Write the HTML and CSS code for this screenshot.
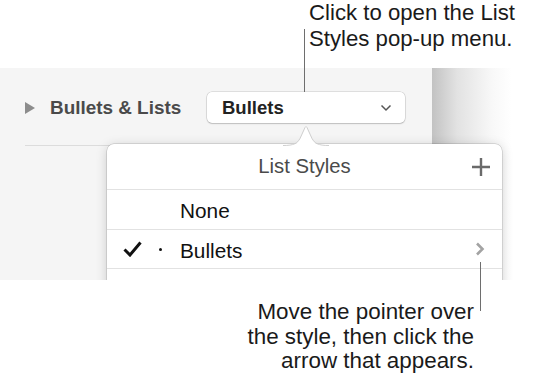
FILE: index.html
```html
<!DOCTYPE html>
<html lang="en">
<head>
    <meta charset="UTF-8">
    <meta content="width=device-width, initial-scale=1.0" name="viewport">
    <title>List Styles pop-up menu</title>
    <link rel="stylesheet" href="styles.css">
</head>
<body>
<div class="note note-top">Click to open the List<br>Styles pop-up menu.</div>
<div class="callout-line callout-top"></div>

<div class="shot">
    <div class="panel">
        <div class="panel-row">
            <span class="disclosure"></span>
            <span class="section-title">Bullets &amp; Lists</span>
            <div class="popup-button">
                <span>Bullets</span>
                <svg width="12" height="8" viewBox="0 0 12 8">
                    <path d="M1.5 1.5 L6 6 L10.5 1.5" fill="none" stroke="#555" stroke-width="1.5"/>
                </svg>
            </div>
        </div>
        <div class="panel-rule"></div>
    </div>
    <div class="shade"></div>

    <svg class="popover-arrow" width="46" height="22" viewBox="0 0 46 22">
        <path d="M0 22 C11 22 14 20 17 15 L22 4 Q23 2 24 4 L29 15 C32 20 35 22 46 22 Z" fill="#fff"/>
        <path d="M0 21.5 C11 21.5 14 19.5 17 14.5 L22 3.5 Q23 1.5 24 3.5 L29 14.5 C32 19.5 35 21.5 46 21.5" fill="none" stroke="#cfcfcf" stroke-width="1"/>
    </svg>

    <div class="popover">
        <div class="popover-head">
            <span></span>
            <span class="popover-title">List Styles</span>
            <svg class="plus" width="18" height="18" viewBox="0 0 18 18">
                <path d="M9 0 V18 M0 9 H18" stroke="#6a6a6a" stroke-width="2.4"/>
            </svg>
        </div>
        <div class="item">
            <span class="check"></span>
            <span class="dot"></span>
            <span class="name">None</span>
        </div>
        <div class="item">
            <span class="check">
                <svg width="19" height="16" viewBox="0 0 19 16">
                    <path d="M1.5 8.5 L7 14 L17.5 1.5" fill="none" stroke="#111" stroke-width="3"/>
                </svg>
            </span>
            <span class="dot"><i></i></span>
            <span class="name">Bullets</span>
            <svg class="go" width="10" height="14" viewBox="0 0 10 14">
                <path d="M2 1.5 L7.5 7 L2 12.5" fill="none" stroke="#a3a3a3" stroke-width="2.6"/>
            </svg>
        </div>
        <div class="item"></div>
    </div>
</div>

<div class="callout-line callout-bottom"></div>
<div class="note note-bottom">Move the pointer over<br>the style, then click the<br>arrow that appears.</div>
</body>
</html>
```

FILE: styles.css
```css
body {
    font-family: "Liberation Sans", Arial, sans-serif;
    margin: 0;
    width: 534px;
    height: 382px;
    position: relative;
    overflow: hidden;
    background: #fff;
}

.note {
    color: #1a1a1a;
}

.note-top {
    height: 68px;
    padding-left: 309px;
    box-sizing: border-box;
    font-size: 22.2px;
    line-height: 25.5px;
}

.note-bottom {
    padding-top: 20px;
    padding-right: 60px;
    text-align: right;
    font-size: 22.4px;
    line-height: 24.5px;
}

.callout-line {
    position: absolute;
    width: 1px;
    background: #6e6e6e;
    z-index: 3;
}

.callout-top {
    left: 304px;
    top: 29px;
    height: 63px;
}

.callout-bottom {
    left: 480px;
    top: 262px;
    height: 49px;
}

.shot {
    height: 212px;
    display: flex;
    position: relative;
    overflow: hidden;
}

.panel {
    width: 432px;
    background: #f5f5f5;
    padding-top: 24px;
    box-sizing: border-box;
}

.shade {
    flex: 1;
    background: linear-gradient(to right, #c2c2c2, #e2e2e2 25px, #f8f8f8 60px, #fff 80px);
}

.panel-row {
    display: flex;
    align-items: center;
    height: 31px;
    padding-left: 25px;
}

.disclosure {
    width: 0;
    height: 0;
    border-left: 10px solid #8c8c8c;
    border-top: 6px solid transparent;
    border-bottom: 6px solid transparent;
    margin-right: 15px;
}

.section-title {
    width: 157px;
    font-size: 18.9px;
    font-weight: bold;
    color: #4a4a4a;
}

.popup-button {
    width: 198px;
    height: 31px;
    box-sizing: border-box;
    display: flex;
    align-items: center;
    justify-content: space-between;
    padding: 0 13px 0 15px;
    background: #fff;
    border-radius: 5px;
    box-shadow: 0 0 0 0.5px rgba(0, 0, 0, 0.18), 0 1px 1.5px rgba(0, 0, 0, 0.15);
    font-size: 18.5px;
    font-weight: bold;
    color: #222;
}

.panel-rule {
    height: 1px;
    margin: 22px 0 0 25px;
    background: #dcdcdc;
}

.popover-arrow {
    position: absolute;
    left: 283px;
    top: 56px;
    z-index: 2;
}

.popover {
    position: absolute;
    left: 107px;
    top: 76px;
    width: 395px;
    height: 180px;
    background: #fff;
    border-radius: 7px;
    box-shadow: 0 0 0 0.5px rgba(0, 0, 0, 0.2), 0 2px 12px rgba(0, 0, 0, 0.18);
}

.popover-head {
    display: grid;
    grid-template-columns: 1fr auto 1fr;
    align-items: center;
    height: 45px;
    border-bottom: 1px solid #e2e2e2;
}

.popover-title {
    font-size: 20.3px;
    color: #4a4a4a;
}

.plus {
    justify-self: end;
    margin-right: 12px;
}

.item {
    display: flex;
    align-items: center;
    height: 38px;
    padding-left: 16px;
    border-bottom: 1px solid #e2e2e2;
}

.item:nth-child(2) {
    height: 39px;
}

.check {
    width: 36px;
    display: flex;
    align-items: center;
}

.dot {
    width: 3px;
    margin-right: 18px;
}

.dot i {
    display: block;
    width: 3px;
    height: 3px;
    border-radius: 50%;
    background: #111;
}

.name {
    flex: 1;
    padding-top: 3px;
    font-size: 20.8px;
    color: #111;
}

.go {
    margin-right: 17px;
}
```
